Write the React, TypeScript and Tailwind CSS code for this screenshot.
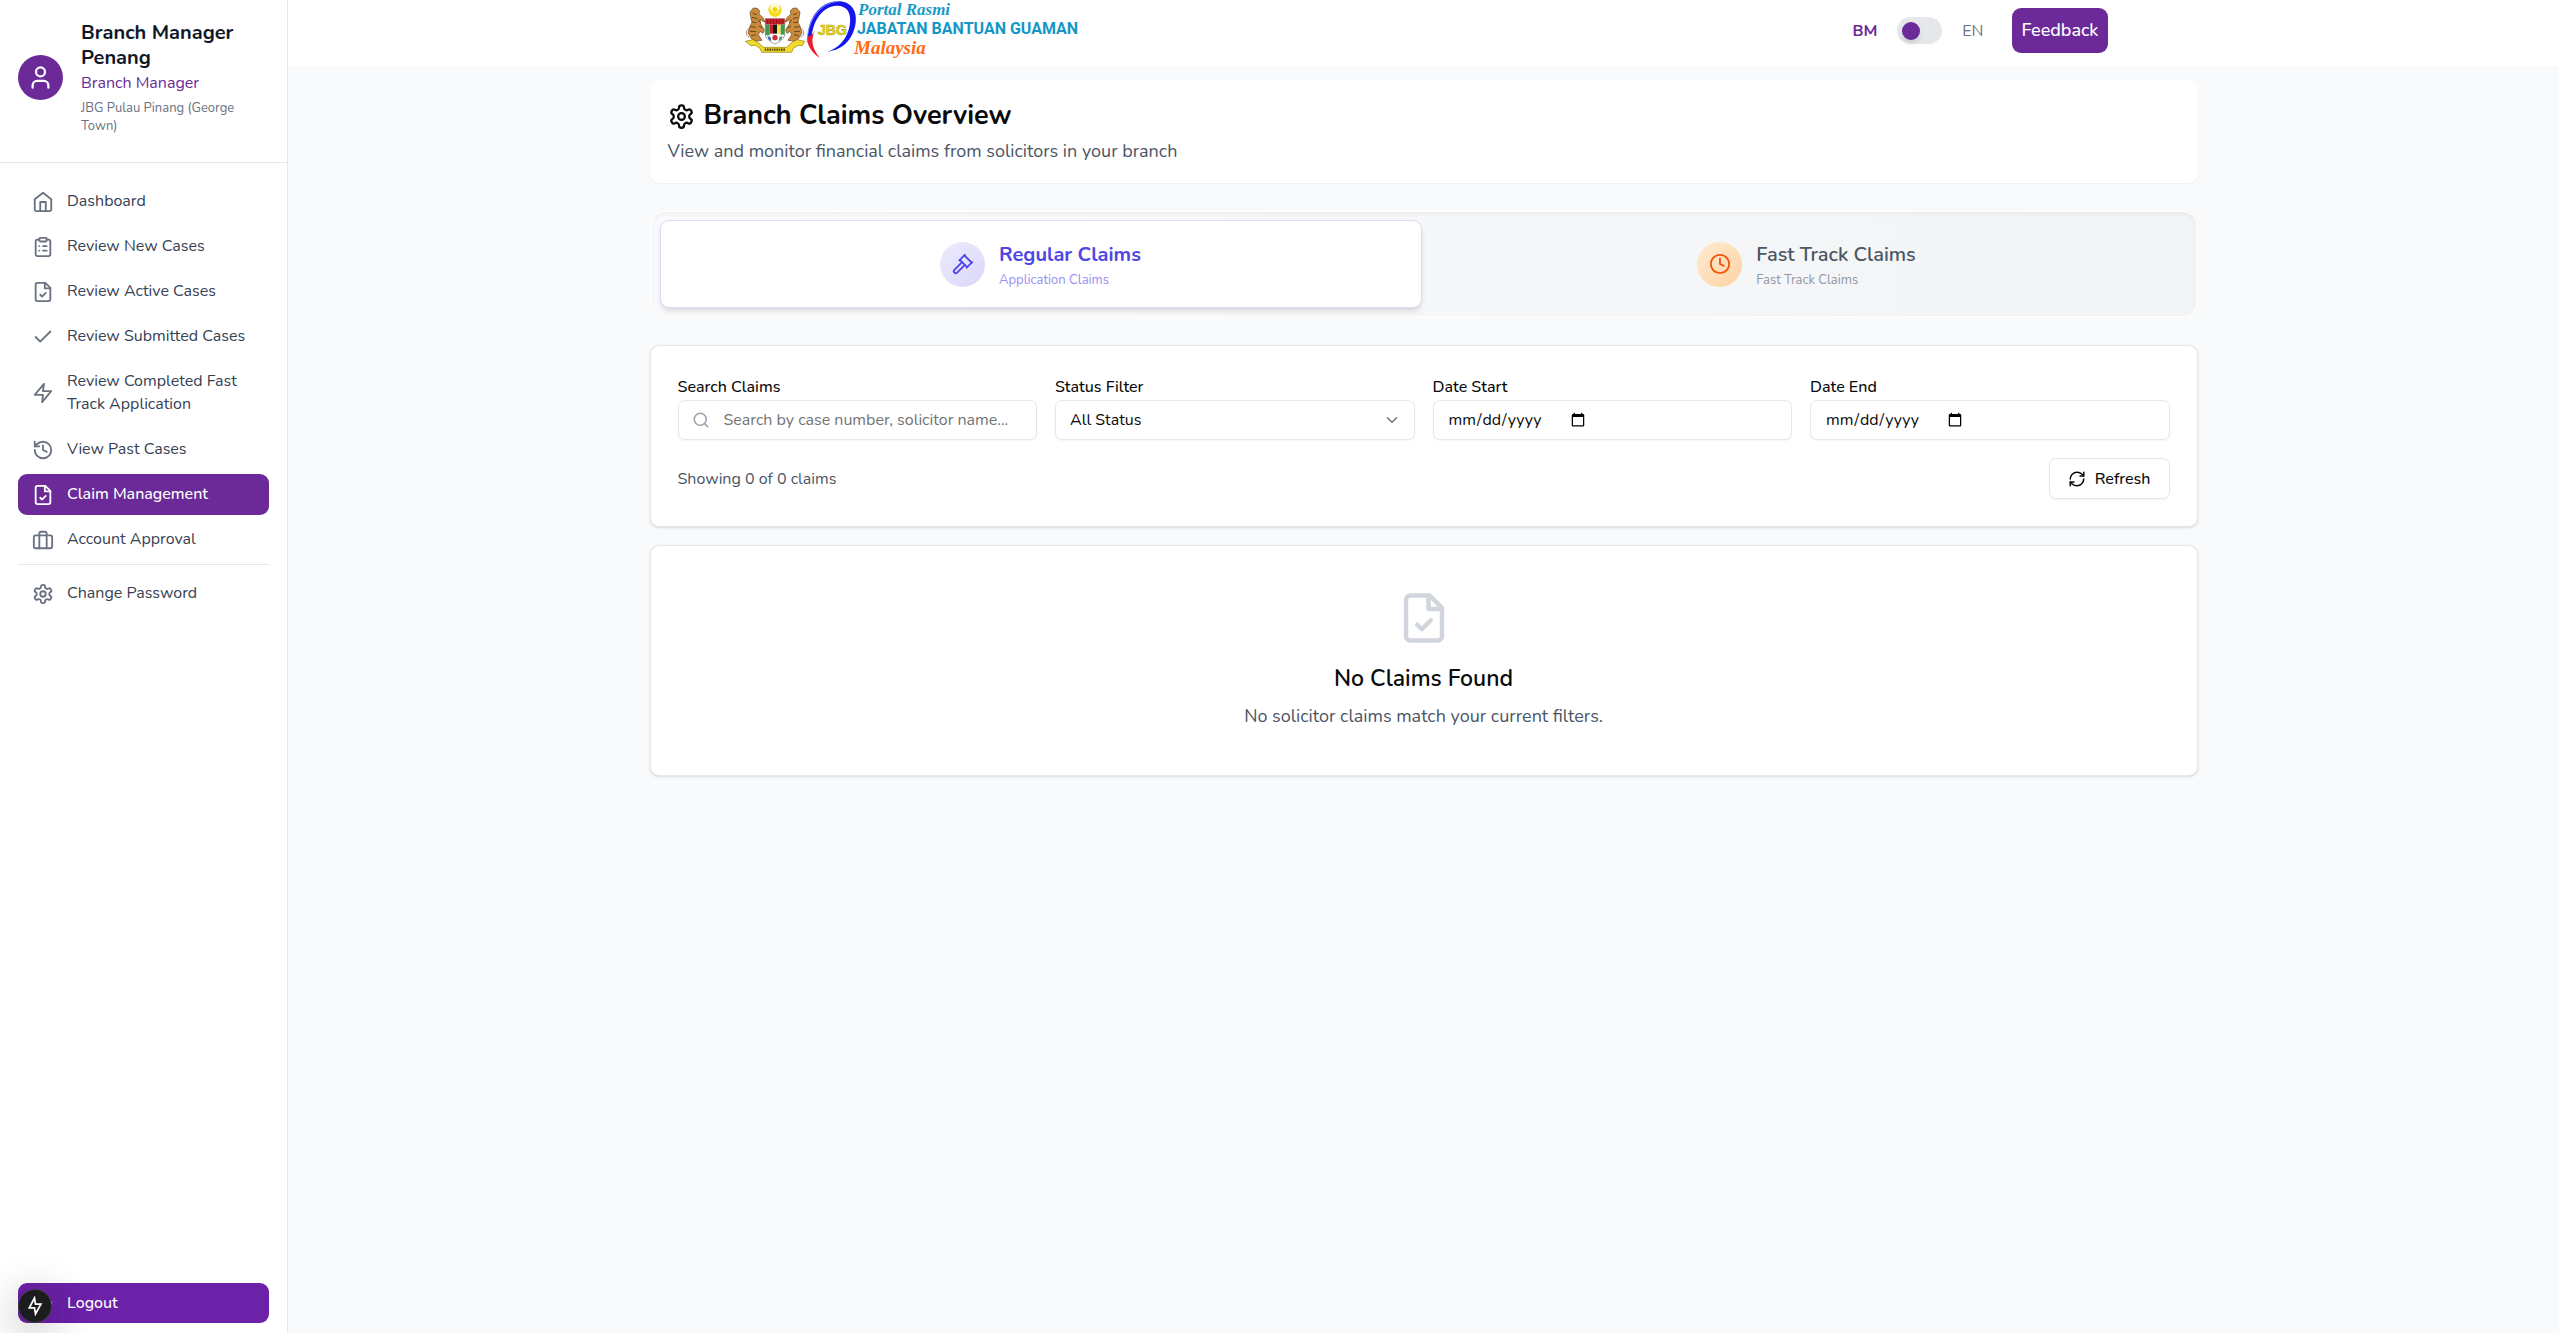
import { useState, type ReactNode } from "react";
import { ChevronDown, Clock, Gavel, LogOut, RefreshCw, Search } from "lucide-react";
import clsx from "clsx";

interface IconProps {
  className?: string;
  children?: ReactNode;
}

function Icon({ className, children }: IconProps) {
  return (
    <svg
      className={className}
      viewBox="0 0 24 24"
      fill="none"
      stroke="currentColor"
      strokeWidth={2}
      strokeLinecap="round"
      strokeLinejoin="round"
      aria-hidden="true"
    >
      {children}
    </svg>
  );
}

const UserIcon = ({ className }: IconProps) => (
  <Icon className={className}>
    <path d="M19 21v-2a4 4 0 0 0-4-4H9a4 4 0 0 0-4 4v2" />
    <circle cx="12" cy="7" r="4" />
  </Icon>
);

const HomeIcon = ({ className }: IconProps) => (
  <Icon className={className}>
    <path d="m3 9 9-7 9 7v11a2 2 0 0 1-2 2H5a2 2 0 0 1-2-2z" />
    <polyline points="9 22 9 12 15 12 15 22" />
  </Icon>
);

const ClipboardIcon = ({ className }: IconProps) => (
  <Icon className={className}>
    <rect width="8" height="4" x="8" y="2" rx="1" ry="1" />
    <path d="M16 4h2a2 2 0 0 1 2 2v14a2 2 0 0 1-2 2H6a2 2 0 0 1-2-2V6a2 2 0 0 1 2-2h2" />
    <path d="M12 11h4M12 16h4M8 11h.01M8 16h.01" />
  </Icon>
);

const FileCheckIcon = ({ className }: IconProps) => (
  <Icon className={className}>
    <path d="M14.5 2H6a2 2 0 0 0-2 2v16a2 2 0 0 0 2 2h12a2 2 0 0 0 2-2V7.5L14.5 2z" />
    <polyline points="14 2 14 8 20 8" />
    <path d="m9 15 2 2 4-4" />
  </Icon>
);

const CheckIcon = ({ className }: IconProps) => (
  <Icon className={className}>
    <path d="M20 6 9 17l-5-5" />
  </Icon>
);

const ZapIcon = ({ className }: IconProps) => (
  <Icon className={className}>
    <polygon points="13 2 3 14 12 14 11 22 21 10 12 10 13 2" />
  </Icon>
);

const HistoryIcon = ({ className }: IconProps) => (
  <Icon className={className}>
    <path d="M3 12a9 9 0 1 0 9-9 9.75 9.75 0 0 0-6.74 2.74L3 8" />
    <path d="M3 3v5h5" />
    <path d="M12 7v5l4 2" />
  </Icon>
);

const BriefcaseIcon = ({ className }: IconProps) => (
  <Icon className={className}>
    <rect width="20" height="14" x="2" y="7" rx="2" ry="2" />
    <path d="M16 21V5a2 2 0 0 0-2-2h-4a2 2 0 0 0-2 2v16" />
  </Icon>
);

const SettingsIcon = ({ className }: IconProps) => (
  <Icon className={className}>
    <path d="M12.22 2h-.44a2 2 0 0 0-2 2v.18a2 2 0 0 1-1 1.73l-.43.25a2 2 0 0 1-2 0l-.15-.08a2 2 0 0 0-2.73.73l-.22.38a2 2 0 0 0 .73 2.73l.15.1a2 2 0 0 1 1 1.72v.51a2 2 0 0 1-1 1.74l-.15.09a2 2 0 0 0-.73 2.73l.22.38a2 2 0 0 0 2.73.73l.15-.08a2 2 0 0 1 2 0l.43.25a2 2 0 0 1 1 1.73V20a2 2 0 0 0 2 2h.44a2 2 0 0 0 2-2v-.18a2 2 0 0 1 1-1.73l.43-.25a2 2 0 0 1 2 0l.15.08a2 2 0 0 0 2.73-.73l.22-.39a2 2 0 0 0-.73-2.73l-.15-.08a2 2 0 0 1-1-1.74v-.5a2 2 0 0 1 1-1.74l.15-.09a2 2 0 0 0 .73-2.73l-.22-.38a2 2 0 0 0-2.73-.73l-.15.08a2 2 0 0 1-2 0l-.43-.25a2 2 0 0 1-1-1.73V4a2 2 0 0 0-2-2z" />
    <circle cx="12" cy="12" r="3" />
  </Icon>
);

const navItems = [
  { label: "Dashboard", icon: HomeIcon },
  { label: "Review New Cases", icon: ClipboardIcon },
  { label: "Review Active Cases", icon: FileCheckIcon },
  { label: "Review Submitted Cases", icon: CheckIcon },
  { label: "Review Completed Fast Track Application", icon: ZapIcon },
  { label: "View Past Cases", icon: HistoryIcon },
  { label: "Claim Management", icon: FileCheckIcon, active: true },
  { label: "Account Approval", icon: BriefcaseIcon },
];

function NavLink({ label, icon: ItemIcon, active }: { label: string; icon: (p: IconProps) => ReactNode; active?: boolean }) {
  return (
    <a
      href="#"
      aria-current={active ? "page" : undefined}
      className={clsx(
        "flex items-center gap-[13px] rounded-[9px] px-[14px] py-[9px] text-[16px] leading-[23px]",
        active ? "bg-[#6b2a98] font-medium text-white" : "text-gray-700 hover:bg-gray-100"
      )}
    >
      <ItemIcon className={clsx("size-[22px] shrink-0", active ? "text-white" : "text-gray-500")} />
      <span>{label}</span>
    </a>
  );
}

function Sidebar() {
  return (
    <aside className="flex w-72 shrink-0 flex-col border-r border-gray-200 bg-white">
      <div className="flex items-center gap-[18px] border-b border-gray-200 px-[18px] pt-5 pb-[27px]">
        <div className="flex size-[45px] shrink-0 items-center justify-center rounded-full bg-[#6b2a98] text-white">
          <UserIcon className="size-[27px]" />
        </div>
        <div>
          <p className="text-[20px] leading-[25px] font-bold text-gray-900">Branch Manager Penang</p>
          <p className="mt-0.5 text-[16px] leading-[23px] text-[#6b2a98]">Branch Manager</p>
          <p className="mt-1 text-[13px] leading-[18px] text-gray-500">JBG Pulau Pinang (George Town)</p>
        </div>
      </div>

      <nav className="flex flex-1 flex-col gap-1 px-[18px] pt-[18px]">
        {navItems.map((item) => (
          <NavLink key={item.label} {...item} />
        ))}
        <hr className="mb-1 border-gray-200" />
        <NavLink label="Change Password" icon={SettingsIcon} />
      </nav>

      <div className="px-[18px] pb-2.5">
        <button className="flex w-full items-center gap-[13px] rounded-[9px] bg-[#6b21a8] px-[14px] py-2 text-[16px] leading-6 font-medium text-white">
          <LogOut className="size-[22px]" />
          Logout
        </button>
      </div>
    </aside>
  );
}

function Logo() {
  return (
    <svg className="h-[60px] w-[345px]" viewBox="0 0 345 60" role="img" aria-label="Jabatan Bantuan Guaman">
      <g transform="scale(0.3333)">
        {/* crescent and star */}
        <circle cx="105" cy="31" r="20" fill="#f5dc1e" />
        <circle cx="105" cy="24" r="14" fill="#fffce0" />
        <path d="M105 17l3 7 7-2-4 6 5 5-8 1-3 7-3-7-8-1 5-5-4-6 7 2z" fill="#f2d200" />
        {/* shield */}
        <path d="M76 56h58v46c0 14-12 22-29 30-17-8-29-16-29-30z" fill="#fff" stroke="#777" strokeWidth="2" />
        <path d="M76 56h58v18H76z" fill="#c7232b" />
        <path d="M82 59v12M91 59v12M100 59v12M110 59v12M119 59v12M128 59v12" stroke="#8c1118" strokeWidth="3" />
        <path d="M76 74h13v32H76z" fill="#3e9a50" />
        <path d="M89 74h10v27H89z" fill="#c7232b" />
        <path d="M99 74h12v27H99z" fill="#151515" />
        <path d="M111 74h11v27h-11z" fill="#f4e34a" />
        <path d="M122 74h12v30h-12z" fill="#3e9a50" />
        <circle cx="105" cy="113" r="8" fill="#ce2d35" />
        <path d="M82 108l10 4 2 12-9-6z" fill="#3b66b5" />
        <path d="M128 108l-10 4-2 12 9-6z" fill="#4aa365" />
        {/* tigers */}
        <g fill="#c98a3c" stroke="#6b4417" strokeWidth="2" strokeLinejoin="round">
          <path d="M40 24l12 1 7 8-2 9 12 11 6 13-8-3-7-6 2 15 11 18-4 10-9-6-5 10 11 17-16 2-15-6-11-18 5-18 7-14-4-17-2-14z" />
          <path d="M170 24l-12 1-7 8 2 9-12 11-6 13 8-3 7-6-2 15-11 18 4 10 9-6 5 10-11 17 16 2 15-6 11-18-5-18-7-14 4-17 2-14z" />
        </g>
        <g stroke="#3a250c" strokeWidth="2" fill="none">
          <path d="M38 40l13 4M36 52l15 4M35 66l15 2M31 80l17 2M30 94l18 1M34 107l14-3M54 60l8 8M57 78l10 6" />
          <path d="M172 40l-13 4M174 52l-15 4M175 66l-15 2M179 80l-17 2M180 94l-18 1M176 107l-14-3M156 60l-8 8M153 78l-10 6" />
          <path d="M28 112c-12-6-12-20-2-26M182 112c12-6 12-20 2-26" stroke="#8a5d22" />
        </g>
        {/* ribbon */}
        <path
          d="M16 124l22-5 16 8 16 15h70l16-15 16-8 22 5-7 13-13-1-14 9-5 12H65l-5-12-14-9-13 1z"
          fill="#f3da2b"
          stroke="#8d7a12"
          strokeWidth="2"
        />
        <path d="M74 149h62" stroke="#59500f" strokeWidth="7" strokeDasharray="5 2" />

        {/* swoosh */}
        <path d="M203 116C203 58 238 4 294 4c42 0 60 32 52 72-9 42-36 74-84 79 34-10 60-40 67-78 7-37-7-60-38-60-41 0-75 46-76 99z" fill="#1414ee" />
        <path d="M202 128C200 62 240 8 294 4" fill="none" stroke="#8c9af0" strokeWidth="3" />
        <path d="M226 92c-14 22-12 52 14 82-28-18-41-42-37-66 7 3 14-4 23-16z" fill="#e8202a" />
        <path d="M228 94c-14 22-8 46 8 66" fill="none" stroke="#fff" strokeWidth="3" />
      </g>
      <text x="78" y="35" className="fill-[#f2e51c] stroke-[#a89d10] font-['Liberation_Sans',sans-serif] text-[14px] font-bold" strokeWidth="0.6">
        JBG
      </text>
      <text x="118" y="15" className="fill-[#1b9ac4] font-['Liberation_Serif',serif] text-[17px] font-bold italic">
        Portal Rasmi
      </text>
      <text x="117" y="34" className="fill-[#1496c6] font-['Roboto','Liberation_Sans',sans-serif] text-[16px] font-bold">
        JABATAN BANTUAN GUAMAN
      </text>
      <text x="114" y="54" className="fill-[#ff6a13] font-['Liberation_Serif',serif] text-[19px] font-bold italic">
        Malaysia
      </text>
    </svg>
  );
}

function Header() {
  const [english, setEnglish] = useState(false);

  return (
    <header className="bg-white">
      <div className="mx-auto flex h-[66px] w-full max-w-[1440px] items-start justify-between px-9">
        <Logo />
        <div className="flex items-center gap-[29px] pt-2">
          <div className="flex items-center gap-5 text-[16px] leading-6">
            <span className="font-bold text-[#6b2a98]">BM</span>
            <button
              role="switch"
              aria-checked={english}
              aria-label="Switch language"
              onClick={() => setEnglish(!english)}
              className={clsx(
                "flex h-[27px] w-[45px] items-center rounded-full bg-gray-200 px-[5px]",
                english && "justify-end"
              )}
            >
              <span className="size-[18px] rounded-full bg-[#6b2a98] shadow-md" />
            </button>
            <span className="text-gray-500">EN</span>
          </div>
          <button className="h-[45px] rounded-[9px] bg-[#6b2a98] px-[9px] text-[18px] font-medium text-white">Feedback</button>
        </div>
      </div>
    </header>
  );
}

function ClaimTabs() {
  const [tab, setTab] = useState("regular");
  const tabClass = "flex h-[88px] items-center justify-center gap-[14px] rounded-[9px] border text-left";
  const activeClass = "border-[#dcdafb] bg-white shadow-md";

  return (
    <div
      role="tablist"
      className="mx-px mt-7 grid grid-cols-2 gap-1 rounded-[14px] border border-white bg-gradient-to-r from-gray-50 to-gray-100 p-2 inset-shadow-sm"
    >
      <button
        role="tab"
        aria-selected={tab === "regular"}
        onClick={() => setTab("regular")}
        className={clsx(tabClass, tab === "regular" ? activeClass : "border-transparent")}
      >
        <span className="flex size-[45px] items-center justify-center rounded-full bg-gradient-to-br from-[#ecebfd] to-[#dad7f9] text-[#4f46e5]">
          <Gavel className="size-[22px]" />
        </span>
        <span className="flex flex-col pt-1">
          <span className="text-[20px] leading-[27px] font-bold text-[#4f46e5]">Regular Claims</span>
          <span className="text-[13px] leading-6 text-[#968ff0]">Application Claims</span>
        </span>
      </button>
      <button
        role="tab"
        aria-selected={tab === "fast"}
        onClick={() => setTab("fast")}
        className={clsx(tabClass, tab === "fast" ? activeClass : "border-transparent")}
      >
        <span className="flex size-[45px] items-center justify-center rounded-full bg-gradient-to-br from-[#ffead2] to-[#fdd3a2] text-[#ea580c]">
          <Clock className="size-[22px]" />
        </span>
        <span className="flex flex-col pt-1">
          <span className="text-[20px] leading-[27px] font-semibold text-gray-600">Fast Track Claims</span>
          <span className="text-[13px] leading-6 text-[#9197a3]">Fast Track Claims</span>
        </span>
      </button>
    </div>
  );
}

const fieldClass =
  "flex h-10 w-full rounded-[7px] border border-gray-200 bg-white px-[14px] text-[16px] text-neutral-950 shadow-xs placeholder:text-neutral-500 focus:outline-none focus:ring-1 focus:ring-[#6b2a98]";

function Field({ id, label, children }: { id: string; label: string; children: ReactNode }) {
  return (
    <div>
      <label htmlFor={id} className="mb-[5px] block text-[16px] leading-4 font-medium text-neutral-950">
        {label}
      </label>
      {children}
    </div>
  );
}

function Filters() {
  const [search, setSearch] = useState("");

  return (
    <section className="mt-7 rounded-[9px] border border-gray-200 bg-white px-[27px] pt-[33px] pb-[27px] shadow-sm">
      <div className="grid grid-cols-4 gap-[18px]">
        <Field id="search" label="Search Claims">
          <div className="relative">
            <Search className="absolute top-[11px] left-[14px] size-[18px] text-gray-400" />
            <input
              id="search"
              type="text"
              value={search}
              onChange={(e) => setSearch(e.target.value)}
              placeholder="Search by case number, solicitor name..."
              className={clsx(fieldClass, "pl-[45px]")}
            />
          </div>
        </Field>
        <Field id="status" label="Status Filter">
          <div className="relative">
            <select id="status" className={clsx(fieldClass, "appearance-none")}>
              <option>All Status</option>
            </select>
            <ChevronDown className="pointer-events-none absolute top-[11px] right-[14px] size-[18px] text-neutral-500" />
          </div>
        </Field>
        <Field id="date-start" label="Date Start">
          <input id="date-start" type="date" className={fieldClass} />
        </Field>
        <Field id="date-end" label="Date End">
          <input id="date-end" type="date" className={fieldClass} />
        </Field>
      </div>
      <div className="mt-[18px] flex items-center justify-between">
        <p className="text-[16px] text-gray-600">Showing 0 of 0 claims</p>
        <button className="flex h-[41px] items-center gap-[9px] rounded-[7px] border border-gray-200 px-[18px] text-[16px] font-medium text-neutral-950 shadow-xs">
          <RefreshCw className="size-[18px]" />
          Refresh
        </button>
      </div>
    </section>
  );
}

export default function App() {
  return (
    <div className="flex min-h-screen bg-[#f9fafc] font-['Nunito','Open_Sans',sans-serif]">
      <Sidebar />
      <div className="flex min-w-0 flex-1 flex-col">
        <Header />
        <main className="mx-auto w-full max-w-[1548px] pt-[14px]">
          <section className="rounded-[9px] bg-white p-[18px] shadow-xs">
            <h1 className="flex items-center gap-[9px] text-[27px] leading-9 font-bold text-neutral-950">
              <SettingsIcon className="size-[27px]" />
              Branch Claims Overview
            </h1>
            <p className="mt-1 text-[18px] leading-[27px] text-gray-600">
              View and monitor financial claims from solicitors in your branch
            </p>
          </section>

          <ClaimTabs />
          <Filters />

          <section className="mt-[18px] flex flex-col items-center rounded-[9px] border border-gray-200 bg-white py-[45px] shadow-sm">
            <FileCheckIcon className="size-[54px] text-gray-300" />
            <h2 className="mt-[18px] text-[23px] leading-[31px] font-semibold text-neutral-950">No Claims Found</h2>
            <p className="mt-[9px] text-[18px] leading-[27px] text-gray-600">No solicitor claims match your current filters.</p>
          </section>
        </main>
      </div>

      <button
        aria-label="Open dev tools"
        className="fixed bottom-2.5 left-[18px] flex size-[34px] items-center justify-center rounded-full border border-[#3f3f42] bg-[#1c1c1f] text-white shadow-[0_8px_40px_8px_rgba(0,0,0,0.18)]"
      >
        <svg className="h-[20px] w-[16px]" viewBox="0 0 16 20" fill="none" stroke="currentColor" strokeWidth="1.7">
          <path d="M7.5 2 2.3 11.8h5.2L8.5 18l5.4-9.8H8.5z" />
        </svg>
      </button>
    </div>
  );
}
